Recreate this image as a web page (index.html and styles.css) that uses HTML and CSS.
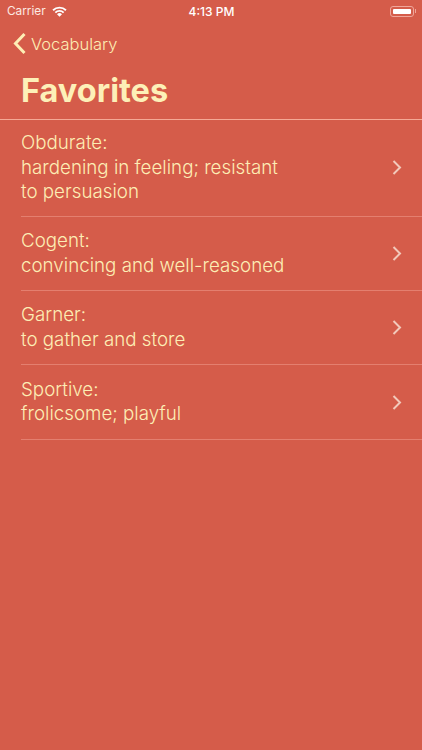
FILE: index.html
```html
<!DOCTYPE html>
<html lang="en">

<head>
    <meta charset="UTF-8">
    <meta name="viewport" content="width=device-width, initial-scale=1.0">
    <title>Favorites</title>
    <link rel="stylesheet" href="styles.css">
</head>

<body>

    <div class="status-bar">
        <div class="status-left">
            <span>Carrier</span>
            <svg class="wifi" width="15" height="11" viewBox="0 0 15 11">
                <path d="M0.4 3.6A10 10 0 0 1 14.6 3.6L13.3 4.9A8.2 8.2 0 0 0 1.7 4.9Z" fill="#fff" />
                <path d="M2.7 5.9A6.8 6.8 0 0 1 12.3 5.9L11 7.2A5 5 0 0 0 4 7.2Z" fill="#fff" />
                <path d="M5 8.2A3.5 3.5 0 0 1 10 8.2L7.5 10.8Z" fill="#fff" />
            </svg>
        </div>
        <div class="status-time">4:13 PM</div>
        <div class="status-right">
            <div class="battery">
                <div class="battery-fill"></div>
            </div>
            <div class="battery-cap"></div>
        </div>
    </div>

    <div class="nav-bar">
        <svg class="back-icon" width="14" height="23" viewBox="0 0 14 23">
            <path d="M11.5 2L2.5 11.5L11.5 21" fill="none" stroke="#fdeeb5" stroke-width="3" />
        </svg>
        <span>Vocabulary</span>
    </div>

    <h1 class="page-title">Favorites</h1>

    <ul class="word-list">
        <li class="word-item">
            <div class="word-text">Obdurate:<br>hardening in feeling; resistant<br>to persuasion</div>
            <svg class="chevron" width="10" height="15" viewBox="0 0 10 15">
                <path d="M1.5 1L8 7.5L1.5 14" fill="none" stroke="#f2c9bb" stroke-width="2" />
            </svg>
        </li>
        <li class="word-item">
            <div class="word-text">Cogent:<br>convincing and well-reasoned</div>
            <svg class="chevron" width="10" height="15" viewBox="0 0 10 15">
                <path d="M1.5 1L8 7.5L1.5 14" fill="none" stroke="#f2c9bb" stroke-width="2" />
            </svg>
        </li>
        <li class="word-item">
            <div class="word-text">Garner:<br>to gather and store</div>
            <svg class="chevron" width="10" height="15" viewBox="0 0 10 15">
                <path d="M1.5 1L8 7.5L1.5 14" fill="none" stroke="#f2c9bb" stroke-width="2" />
            </svg>
        </li>
        <li class="word-item">
            <div class="word-text">Sportive:<br>frolicsome; playful</div>
            <svg class="chevron" width="10" height="15" viewBox="0 0 10 15">
                <path d="M1.5 1L8 7.5L1.5 14" fill="none" stroke="#f2c9bb" stroke-width="2" />
            </svg>
        </li>
    </ul>

</body>

</html>
```

FILE: styles.css
```css
body {
    font-family: Inter, "Liberation Sans", sans-serif;
    background-color: #d55c4a;
    margin: 0;
    padding: 0;
    width: 422px;
    height: 750px;
    overflow: hidden;
}

.status-bar {
    height: 22px;
    padding: 0 6px 0 7px;
    display: grid;
    grid-template-columns: 1fr auto 1fr;
    align-items: center;
    color: #fff;
    font-size: 12px;
}

.status-left {
    display: flex;
    align-items: center;
    gap: 6px;
    color: #fde9e2;
    font-size: 11.8px;
}

.status-time {
    font-weight: 500;
}

.status-right {
    display: flex;
    justify-content: flex-end;
    align-items: center;
}

.battery {
    width: 24px;
    height: 11px;
    box-sizing: border-box;
    padding: 2px;
    border: 1px solid #f0a79b;
    border-radius: 3px;
}

.battery-fill {
    height: 100%;
    background-color: #fff;
    border-radius: 1px;
}

.battery-cap {
    width: 1px;
    height: 4px;
    margin-left: 1px;
    background-color: #f0a79b;
}

.nav-bar {
    height: 43px;
    padding-left: 13px;
    display: flex;
    align-items: center;
    gap: 4px;
    color: #fdeeb5;
    font-size: 16.5px;
    font-weight: 300;
}

.page-title {
    margin: 0;
    height: 54.5px;
    padding-left: 21px;
    line-height: 52px;
    box-sizing: border-box;
    border-bottom: 1.5px solid #f5a995;
    color: #fdf0b8;
    font-size: 32.5px;
    font-weight: 700;
}

.word-list {
    list-style: none;
    margin: 0;
    padding: 0 0 0 21px;
}

.word-item {
    display: flex;
    justify-content: space-between;
    align-items: center;
    padding: 12.2px 20px 12px 0;
    border-bottom: 1px solid #e47f6f;
}

.word-item:first-child {
    padding-top: 11.5px;
    padding-bottom: 11.5px;
}

.word-text {
    color: #fdeeb5;
    font-size: 18.75px;
    font-weight: 300;
    line-height: 24.5px;
}
```
